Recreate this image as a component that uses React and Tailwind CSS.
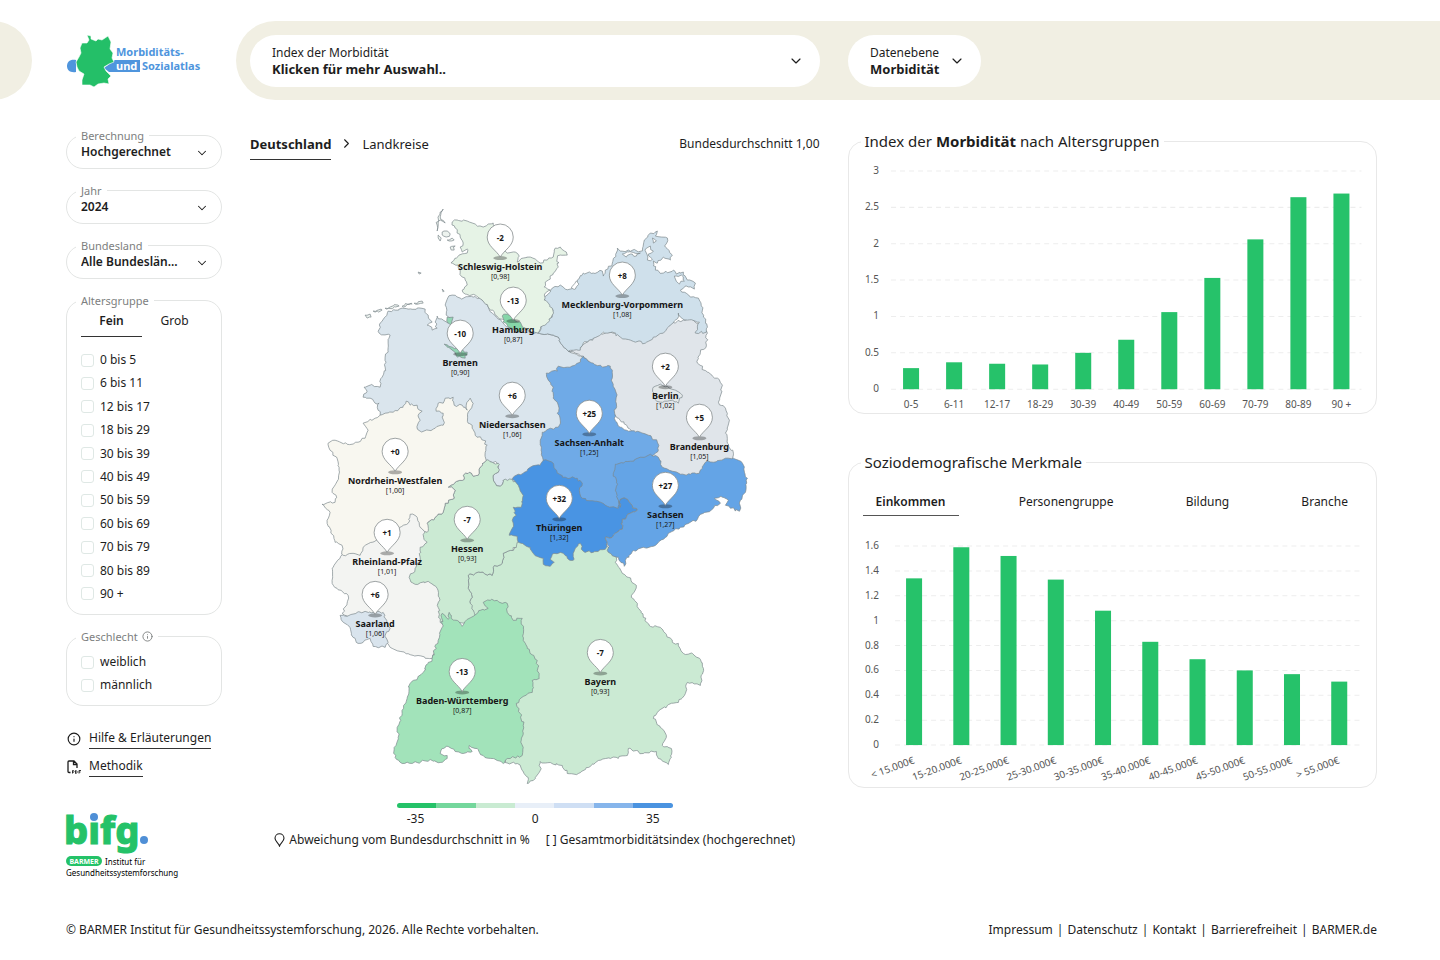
import { ChevronDown, ChevronRight, Info } from 'lucide-react';

const AGE_GROUPS = [
  '0 bis 5', '6 bis 11', '12 bis 17', '18 bis 29', '30 bis 39', '40 bis 49',
  '50 bis 59', '60 bis 69', '70 bis 79', '80 bis 89', '90 +',
];

const MORBIDITY_BY_AGE = [
  ['0-5', 0.29], ['6-11', 0.37], ['12-17', 0.35], ['18-29', 0.34], ['30-39', 0.5], ['40-49', 0.68],
  ['50-59', 1.06], ['60-69', 1.53], ['70-79', 2.06], ['80-89', 2.64], ['90 +', 2.69],
];

const MORBIDITY_BY_INCOME = [
  ['< 15.000€', 1.34], ['15-20.000€', 1.59], ['20-25.000€', 1.52], ['25-30.000€', 1.33], ['30-35.000€', 1.08],
  ['35-40.000€', 0.83], ['40-45.000€', 0.69], ['45-50.000€', 0.6], ['50-55.000€', 0.57], ['> 55.000€', 0.51],
];

// Painted in this order, later shapes cover the edges of earlier ones
const STATES = [
  { id: 'NI', fill: '#dae5ed', points: '448,297 452,295 460,298 473,297 480,298 487,305 492,313 498,319 508,327 524,332 538,333 553,335 558,337 562,345 568,351 576,354 590,362 590,430 560,480 515,490 503,480 500,486 495,483 493,475 498,472 497,463 490,461 480,466 462,440 443,430 420,436 410,420 380,415 378,410 379,403 375,403 370,398 363,397 367,391 364,387 370,385 380,387 382,377 385,367 385,357 388,352 388,343 390,335 379,333 380,323 385,317 388,311 395,310 402,308 408,309 417,308 425,309 428,315 432,322 427,325 432,330 437,328 435,322 437,316 443,320 448,323 450,318 446,315 445,305' },
  { id: 'RP', fill: '#f3f4f2', points: '343,553 353,545 372,538 400,520 412,510 430,525 440,560 445,590 445,620 440,640 432,658 428,658 413,655 400,651 392,648 386,642 370,630 342,613 347,603 348,595 337,588 332,580 332,568 340,558' },
  { id: 'BB', fill: '#e0e5ea', points: '568,351 580,348 600,333 650,330 690,318 707,333 706,345 700,352 697,363 707,372 717,378 722,385 718,402 725,408 729,420 725,433 727,443 733,453 731,462 705,475 690,480 655,476 640,440 600,400 590,363 583,356 575,353' },
  { id: 'MV', fill: '#cfe0eb', points: '550,292 552,288 560,285 565,289 573,288 577,280 583,273 593,273 602,271 603,276 605,270 612,263 617,248 620,251 628,250 642,251 644,240 650,233 657,231 655,236 661,237 667,238 665,247 672,255 670,260 663,257 657,263 653,261 655,270 663,273 673,270 676,274 683,272 687,280 695,283 694,289 686,286 680,290 690,297 698,298 702,310 707,327 706,332 695,333 697,326 699,322 687,320 680,317 678,313 675,320 668,327 663,333 653,337 645,343 630,340 620,337 612,332 603,332 600,335 583,343 580,350 568,351 562,345 558,337 553,335 538,333 541,326 547,322 552,317 553,310 547,307 544,297' },
  { id: 'SH', fill: '#e6f3e6', points: '452,222 457,220 467,221 475,224 483,227 488,224 493,223 495,227 491,234 500,250 507,253 515,252 519,256 517,262 523,258 530,257 535,259 540,263 547,260 553,257 554,250 555,248 560,247 566,252 567,255 560,255 557,258 558,267 553,273 550,279 545,282 544,287 550,290 545,293 544,300 552,308 552,315 547,323 540,327 538,333 524,330 505,320 495,315 488,307 482,300 475,295 465,294 462,290 467,285 465,280 462,277 460,272 458,265 451,263 455,258 467,253 467,249 462,252 460,247 463,243 460,237 455,228' },
  { id: 'ST', fill: '#6faae7', points: '546,373 557,371 558,366 567,367 575,365 580,362 583,356 588,361 593,363 602,367 610,366 612,370 611,380 616,393 616,403 614,418 620,427 628,431 640,432 648,435 657,442 658,450 653,455 640,465 630,490 618,508 590,510 555,480 543,460 540,440 542,432 550,428 558,427 560,420 557,413 558,405 553,398 553,387 548,380' },
  { id: 'BY', fill: '#cbead3', points: '468,575 480,572 492,575 493,567 502,563 503,553 513,550 517,540 560,535 600,540 612,550 616,557 615,562 622,573 628,577 636,585 631,597 637,603 643,617 650,626 660,627 666,634 672,642 678,643 683,653 692,653 700,659 703,668 700,685 687,682 685,693 678,702 667,705 657,712 653,718 660,727 666,735 662,745 671,748 671,757 668,764 658,758 656,751 643,753 636,750 628,748 627,755 610,758 598,760 588,767 578,773 567,773 562,765 550,762 540,761 540,770 533,780 527,783 528,777 522,770 517,763 505,762 500,740 500,640 472,616 470,603 472,597 468,588' },
  { id: 'HE', fill: '#cbead3', points: '486,460 492,462 498,463 498,472 493,475 495,483 500,486 503,480 512,479 525,490 525,530 517,542 513,550 503,553 502,563 493,567 492,575 480,572 468,575 468,588 472,597 470,603 474,612 476,622 440,622 438,607 439,597 437,588 428,581 415,584 409,577 415,568 420,557 420,547 427,542 423,534 427,523 435,517 443,512 445,503 454,498 455,490 448,487 455,482 464,479 463,475 469,472 473,476 479,473 480,467' },
  { id: 'NW', fill: '#f8f7f0', points: '380,415 385,413 393,412 403,407 406,401 410,405 417,405 418,409 422,411 418,415 420,420 417,428 420,431 428,430 435,428 443,425 443,413 436,411 438,403 443,403 445,398 453,397 454,405 462,405 467,410 466,405 470,398 473,403 468,412 468,423 472,428 475,435 483,440 487,445 485,452 486,460 480,467 479,473 473,476 469,472 463,475 464,479 455,482 448,487 455,490 454,498 445,503 443,512 435,517 427,523 427,532 420,527 417,517 410,514 408,523 400,527 386,536 372,542 363,547 360,555 353,553 343,555 342,545 335,542 331,530 327,520 330,512 322,504 335,502 336,495 332,492 336,483 339,470 337,458 330,450 328,443 335,440 347,444 358,442 365,438 368,430 363,423 375,418' },
  { id: 'TH', fill: '#4994e3', points: '512,479 513,477 523,473 530,467 540,465 543,460 553,463 557,473 565,477 577,478 582,483 579,490 582,498 595,501 607,506 618,508 620,499 625,498 630,503 637,510 630,513 622,519 622,529 615,533 612,537 605,537 607,542 605,549 593,552 583,551 580,543 575,548 573,560 567,558 563,553 552,554 550,559 554,562 550,566 543,564 543,558 533,553 530,547 518,542 517,536 509,535 512,528 512,520 516,515 513,507 521,507 523,495 518,485' },
  { id: 'SN', fill: '#64a4e6', points: '615,464 630,461 640,457 650,454 658,457 662,467 672,471 680,474 690,474 699,473 703,465 705,462 713,462 725,458 733,458 742,463 744,472 747,478 745,492 740,500 739,511 730,508 725,505 728,500 722,497 714,498 720,503 713,508 703,513 697,519 680,527 668,533 663,539 653,546 643,547 632,551 625,560 624,566 618,557 608,552 607,542 605,537 612,537 615,533 622,529 622,519 630,513 637,510 630,503 625,498 620,499 620,507 618,500 616,492 616,482 613,473' },
  { id: 'BW', fill: '#a2e3ba', points: '483,602 490,600 497,600 502,603 507,603 507,612 513,620 520,618 522,618 523,640 527,648 537,660 539,678 532,680 532,692 523,696 516,703 520,713 523,725 521,740 523,747 522,755 507,758 503,763 497,760 483,755 477,748 469,745 472,751 463,753 455,751 448,746 442,748 440,753 447,755 447,758 440,762 430,759 417,762 402,763 395,757 394,747 398,737 397,727 402,713 407,698 410,683 423,672 428,663 432,658 438,640 442,627 442,613 448,619 449,612 451,618 457,620 462,626 467,619 473,616 480,610 488,608' },
  { id: 'SL', fill: '#d9e4ed', points: '340,615 347,616 357,612 365,611 383,612 387,623 390,628 385,635 388,642 385,647 373,646 370,638 363,642 358,643 353,637 350,627 341,619' },
  { id: 'HB', fill: '#93d6b5', points: '444,344 452,347 459,350 467,352 465,358 457,357 452,350' },
  { id: 'HB2', fill: '#93d6b5', points: '447,317 453,317 451,325 448,323' },
  { id: 'HH', fill: '#86d6a8', points: '502,316 507,314 513,318 520,322 525,328 518,332 508,327 503,322' },
  { id: 'BE', fill: '#e3e8e9', points: '653,387 660,384 667,386 675,390 682,395 678,403 672,400 660,402 653,397' },
];

const ISLANDS = [
  '443,209 440,212 438,218 437,225 437,231 438,224 440,220 445,223 440,217 441,212',
  '442,232 447,231 450,234 446,237 442,235',
  '438,235 441,238 440,241 438,238',
  '447,240 452,238 454,240 449,241',
  '450,247 455,246 454,250 451,250',
  '418,272 421,273 419,274',
  '442,289 444,291 443,292',
  '365,315 370,314 371,317 367,318',
  '373,311 381,309 382,310 375,312',
  '385,308 398,305 399,306 386,309',
  '402,306 411,303 412,304 403,307',
  '414,303 422,301 423,303 415,304',
];

// Inlets and lagoons behind the Baltic coast
const LAGOONS = [
  '571,288 576,281 578,283 575,289',
  '622,254 628,252 640,253 636,256 630,254 626,257',
  '645,249 650,246 653,251 648,254 652,259 647,260',
  '674,276 681,275 684,281 679,284',
  '652,238 656,241 653,243',
];

const PINS = [
  { x: 500, y: 238, value: '-2', name: 'Schleswig-Holstein', index: '0,98' },
  { x: 622, y: 276, value: '+8', name: 'Mecklenburg-Vorpommern', index: '1,08' },
  { x: 513, y: 301, value: '-13', name: 'Hamburg', index: '0,87' },
  { x: 460, y: 334, value: '-10', name: 'Bremen', index: '0,90' },
  { x: 665, y: 367, value: '+2', name: 'Berlin', index: '1,02' },
  { x: 512, y: 396, value: '+6', name: 'Niedersachsen', index: '1,06' },
  { x: 589, y: 414, value: '+25', name: 'Sachsen-Anhalt', index: '1,25' },
  { x: 699, y: 418, value: '+5', name: 'Brandenburg', index: '1,05' },
  { x: 395, y: 452, value: '+0', name: 'Nordrhein-Westfalen', index: '1,00' },
  { x: 665, y: 486, value: '+27', name: 'Sachsen', index: '1,27' },
  { x: 559, y: 499, value: '+32', name: 'Thüringen', index: '1,32' },
  { x: 467, y: 520, value: '-7', name: 'Hessen', index: '0,93' },
  { x: 387, y: 533, value: '+1', name: 'Rheinland-Pfalz', index: '1,01' },
  { x: 375, y: 595, value: '+6', name: 'Saarland', index: '1,06' },
  { x: 600, y: 653, value: '-7', name: 'Bayern', index: '0,93' },
  { x: 462, y: 672, value: '-13', name: 'Baden-Württemberg', index: '0,87' },
];

const LEGEND_COLORS = ['#24c268', '#74d79c', '#c9ebd2', '#e8eff8', '#cfdff4', '#86b5eb', '#4a93e0'];

const FOOTER_LINKS = ['Impressum', 'Datenschutz', 'Kontakt', 'Barrierefreiheit', 'BARMER.de'];

// Cheap repeatable noise, so a border looks the same on each render
function noise(a, b) {
  const v = Math.sin(a * 12.9898 + b * 78.233) * 43758.5453;
  return v - Math.floor(v) - 0.5;
}

// Splits each edge into short pieces and shakes them a little, gives the ragged border
function ragged(points) {
  const pts = points.split(' ').map(p => p.split(',').map(Number));
  const out = [];
  pts.forEach(([x1, y1], i) => {
    const [x2, y2] = pts[(i + 1) % pts.length];
    const steps = Math.max(1, Math.round(Math.hypot(x2 - x1, y2 - y1) / 2.5));
    for (let s = 0; s < steps; s++) {
      const x = x1 + ((x2 - x1) * s) / steps;
      const y = y1 + ((y2 - y1) * s) / steps;
      const k = s === 0 ? 0 : 2.6;
      out.push(`${(x + noise(x, y) * k).toFixed(1)},${(y + noise(y, x) * k).toFixed(1)}`);
    }
  });
  return out.join(' ');
}

function SelectBox({ id, label, value }) {
  return (
    <fieldset className="min-w-0 rounded-[17px] border border-[#e3e5e4] h-[42px]">
      <legend className="ml-[9px] px-[5px] text-[11px] leading-[17px] text-[#7d8080]">
        <label htmlFor={id}>{label}</label>
      </legend>
      <div className="relative">
        <select id={id} className="block w-full appearance-none bg-transparent pl-3.5 pr-10 text-xs leading-4 font-semibold text-ellipsis outline-none">
          <option>{value}</option>
        </select>
        <ChevronDown size={14} strokeWidth={1.75} className="pointer-events-none absolute right-3 top-[2px]" />
      </div>
    </fieldset>
  );
}

function HeaderSelect({ id, label, value, className }) {
  return (
    <div className={`relative rounded-full bg-white ${className}`}>
      <label htmlFor={id} className="absolute left-[22px] top-[10px] text-xs leading-4">{label}</label>
      <select id={id} className="block h-[52px] w-full appearance-none rounded-full bg-transparent pl-[22px] pr-8 pt-[18px] text-[13px] font-bold outline-none">
        <option>{value}</option>
      </select>
      <ChevronDown size={16} strokeWidth={1.75} className="pointer-events-none absolute right-4 top-[18px]" />
    </div>
  );
}

function CheckRow({ label }) {
  return (
    <label className="flex h-5 items-center gap-1.5 text-xs">
      <input type="checkbox" className="size-[13px] appearance-none rounded-[3px] border border-[#dfe8e5] bg-white" />
      {label}
    </label>
  );
}

function AtlasLogo() {
  return (
    <svg viewBox="66 32 142 58" className="block h-[58px] w-[142px]" role="img" aria-label="Morbiditäts- und Sozialatlas">
      <path d="M76 60c-6-1-9 2-9 6s3 7 9 6z" fill="#4f95dd" />
      <path d="M104 68l11-8h25v12h-31z" fill="#4f95dd" />
      <polygon
        points="87,35 91,36 91,39 96,41 98,39 102,40 105,38 108,36 111,42 110,49 113,53 112,58 114,62 109,64 104,67 106,71 111,76 108,79 109,84 104,83 98,84 94,87 90,85 82,85 82,80 84,74 79,71 77,67 76,62 79,57 81,53 80,48 82,43 87,43 89,40"
        fill="#24bf68" stroke="#fff" strokeWidth="0.6"
      />
      <g fontSize="11" fontWeight="700" fill="#4f95dd">
        <text x="116" y="56">Morbiditäts-</text>
        <text x="116" y="70" fill="#fff">und</text>
        <text x="142" y="70">Sozialatlas</text>
      </g>
    </svg>
  );
}

function BifgLogo() {
  return (
    <svg viewBox="60 798 130 82" className="-ml-1.5 block h-[82px] w-[130px]" role="img" aria-label="bifg. BARMER Institut für Gesundheitssystemforschung">
      <text x="64" y="844" fontSize="38" fontWeight="800" fill="#24c268" stroke="#24c268" strokeWidth="1">bifg</text>
      <circle cx="94" cy="816" r="6" fill="#fff" />
      <circle cx="94" cy="817" r="4" fill="#4f8fd6" />
      <circle cx="144" cy="840" r="4" fill="#4f8fd6" />
      <rect x="66" y="856" width="36" height="10" rx="5" fill="#24c268" />
      <text x="84" y="864" fontSize="7" fontWeight="700" fill="#fff" textAnchor="middle">BARMER</text>
      <text x="105" y="865" fontSize="8">Institut für</text>
      <text x="66" y="876" fontSize="8">Gesundheitssystemforschung</text>
    </svg>
  );
}

function PdfIcon() {
  return (
    <svg width="14" height="14" viewBox="0 0 14 14" fill="none" stroke="currentColor" strokeWidth="1.3">
      <path d="M3.500 12.500H2a1 1 0 0 1-1-1V2a1 1 0 0 1 1-1h5l3 3v4M6.500 1v3.500H10" />
      <path d="M5.500 13.500v-3h1a1 1 0 0 1 0 1.800h-1M8.500 10.500v3c2.200 0 2.200-3 0-3M12 13.500v-3h2M12 12h1.500" strokeWidth="0.9" />
    </svg>
  );
}

function Pin({ x, y, value, name, index }) {
  return (
    <g>
      <ellipse cx={x} cy={y + 20} rx="7" ry="2" fill="#000" opacity="0.3" />
      <path
        d={`M${x} ${y + 19}C${x - 4} ${y + 12} ${x - 13} ${y + 8} ${x - 13} ${y - 1}a13 13 0 0 1 26 0C${x + 13} ${y + 8} ${x + 4} ${y + 12} ${x} ${y + 19}z`}
        fill="#fff" stroke="#858b8d" strokeWidth="0.8"
      />
      <text x={x} y={y + 3} fontSize="8" fontWeight="700" textAnchor="middle">{value}</text>
      <text x={x} y={y + 32} fontSize="9" fontWeight="700" textAnchor="middle">{name}</text>
      <text x={x} y={y + 41} fontSize="7" textAnchor="middle">[{index}]</text>
    </g>
  );
}

function GermanyMap() {
  return (
    <svg viewBox="250 200 569 590" className="block w-full" role="img" aria-label="Karte der Bundesländer">
      <g stroke="#7d888c" strokeWidth="0.7" strokeLinejoin="round">
        {STATES.map(s => <polygon key={s.id} points={ragged(s.points)} fill={s.fill} />)}
        {ISLANDS.map(p => <polygon key={p} points={ragged(p)} fill="#edf3ef" />)}
        {LAGOONS.map(p => <polygon key={p} points={ragged(p)} fill="#fff" />)}
      </g>
      <g fill="#161616">
        {PINS.map(p => <Pin key={p.name} {...p} />)}
      </g>
    </svg>
  );
}

function BarChart({ data, ticks, unit, height, left, first, step, labelGap, slanted }) {
  const top = 10;
  const base = top + ticks[0] * unit;
  const labelY = base + labelGap;
  return (
    <svg viewBox={`0 0 527 ${height}`} className="block w-full" role="img" aria-label="Balkendiagramm">
      {ticks.map(t => {
        const y = base - t * unit;
        return (
          <g key={t}>
            <line x1={left} x2="512" y1={y} y2={y} stroke="#ededed" strokeDasharray="5 4" />
            <text x="30" y={y + 3} fontSize="10" textAnchor="end" fill="#555">{t}</text>
          </g>
        );
      })}
      {data.map(([label, value], i) => {
        const x = first + i * step;
        return (
          <g key={label}>
            <rect x={x - 8} y={base - value * unit} width="16" height={value * unit} fill="#26c26a" />
            {slanted ? (
              <text x={x + 1} y={labelY} fontSize="10" textAnchor="end" fill="#555" transform={`rotate(-20 ${x + 1} ${labelY})`}>{label}</text>
            ) : (
              <text x={x} y={labelY} fontSize="10" textAnchor="middle" fill="#555">{label}</text>
            )}
          </g>
        );
      })}
    </svg>
  );
}

function ChartPanel({ title, children }) {
  return (
    <fieldset className="min-w-0 rounded-2xl border border-[#e8e8e8]">
      <legend className="ml-3 px-1 text-[15px] leading-6">{title}</legend>
      {children}
    </fieldset>
  );
}

export default function App() {
  return (
    <div className="min-h-screen bg-white pt-[21px] font-['Noto_Sans',sans-serif] text-[#1d1d1d]">
      <header className="flex h-[79px] items-center">
        <div className="h-full w-8 overflow-hidden">
          <div className="-ml-[47px] h-full w-[79px] rounded-full bg-[#f1efe3]" />
        </div>
        <a href="#" className="ml-[34px] w-[170px]"><AtlasLogo /></a>
        <div className="flex h-full flex-1 items-start gap-7 rounded-l-full bg-[#f1efe3] pl-3.5 pt-3.5">
          <HeaderSelect id="index" label="Index der Morbidität" value="Klicken für mehr Auswahl.." className="w-[570px]" />
          <HeaderSelect id="ebene" label="Datenebene" value="Morbidität" className="w-[133px]" />
        </div>
      </header>

      <main className="grid grid-cols-[156px_569fr_529fr] gap-x-7 pl-[66px] pr-[63px] pt-[27px]">
        <aside className="flex flex-col">
          <div className="flex flex-col gap-[13px]">
            <SelectBox id="berechnung" label="Berechnung" value="Hochgerechnet" />
            <SelectBox id="jahr" label="Jahr" value="2024" />
            <SelectBox id="land" label="Bundesland" value="Alle Bundeslän..." />

            <fieldset className="rounded-[17px] border border-[#e3e5e4] px-3.5 pb-2.5">
              <legend className="-ml-[5px] px-[5px] text-[11px] leading-[17px] text-[#7d8080]">Altersgruppe</legend>
              <div className="flex text-xs">
                <button className="h-7 w-[61px] border-b border-[#333] pb-1 font-semibold">Fein</button>
                <button className="h-7 w-[65px] pb-1">Grob</button>
              </div>
              <div className="mt-[13px] flex h-[254px] flex-col justify-between">
                {AGE_GROUPS.map(g => <CheckRow key={g} label={g} />)}
              </div>
            </fieldset>

            <fieldset className="rounded-[17px] border border-[#e3e5e4] px-3.5 pb-2.5">
              <legend className="-ml-[5px] flex items-center gap-1 px-[5px] text-[11px] leading-[17px] text-[#7d8080]">
                Geschlecht <Info size={11} />
              </legend>
              <div className="mt-[7px] flex flex-col gap-[3px]">
                <CheckRow label="weiblich" />
                <CheckRow label="männlich" />
              </div>
            </fieldset>
          </div>

          <nav className="mt-[22px] flex flex-col gap-[7px] pl-px text-xs">
            <a href="#" className="flex items-center gap-2">
              <Info size={14} /><span className="border-b border-[#333] leading-5">Hilfe &amp; Erläuterungen</span>
            </a>
            <a href="#" className="flex items-center gap-2">
              <PdfIcon /><span className="border-b border-[#333] leading-5">Methodik</span>
            </a>
          </nav>
          <a href="#" className="mt-[21px]"><BifgLogo /></a>
        </aside>

        <section>
          <div className="flex items-start justify-between pt-2">
            <div className="flex items-start gap-2">
              <button className="h-[25px] border-b border-[#333] pb-[7px] text-[13px] leading-[18px] font-bold">Deutschland</button>
              <ChevronRight size={15} strokeWidth={1.75} className="mt-px" />
              <button className="text-[13px] leading-[18px]">Landkreise</button>
            </div>
            <p className="text-xs leading-[18px]">Bundesdurchschnitt 1,00</p>
          </div>
          <div className="mt-10">
            <GermanyMap />
          </div>
          <div className="mx-auto mt-3 w-[276px]">
            <div className="flex h-[5px] overflow-hidden rounded-full">
              {LEGEND_COLORS.map(c => <span key={c} className="flex-1" style={{ backgroundColor: c }} />)}
            </div>
            <div className="mt-px flex justify-between pl-2.5 pr-[13px] text-xs leading-5">
              <span>-35</span><span>0</span><span>35</span>
            </div>
          </div>
          <div className="flex items-center justify-center gap-4 text-xs leading-[22px]">
            <span className="flex items-center gap-1">
              <svg width="11" height="14" viewBox="0 0 11 14" fill="none" stroke="currentColor" strokeWidth="1.100">
                <path d="M5.500 13C4.500 10 1 8.500 1 5.300a4.500 4.500 0 0 1 9 0C10 8.500 6.500 10 5.500 13z" />
              </svg>
              Abweichung vom Bundesdurchschnitt in %
            </span>
            <span>[ ] Gesamtmorbiditätsindex (hochgerechnet)</span>
          </div>
        </section>

        <section className="flex flex-col gap-9 pt-0.5">
          <ChartPanel title={<>Index der <b>Morbidität</b> nach Altersgruppen</>}>
            <div className="pt-2">
              <BarChart data={MORBIDITY_BY_AGE} ticks={[3, 2.5, 2, 1.5, 1, 0.5, 0]} unit={72.67} height={252} left={42} first={62} step={43} labelGap={19} />
            </div>
          </ChartPanel>

          <ChartPanel title="Soziodemografische Merkmale">
            <div className="flex justify-between pl-3.5 pr-4 pt-3 text-xs">
              <button className="h-[30px] w-24 border-b border-[#555] pt-0.5 font-semibold">Einkommen</button>
              <button className="h-[30px] px-3 pt-0.5">Personengruppe</button>
              <button className="h-[30px] px-3 pt-0.5">Bildung</button>
              <button className="h-[30px] px-3 pt-0.5">Branche</button>
            </div>
            <div className="pt-5">
              <BarChart data={MORBIDITY_BY_INCOME} ticks={[1.6, 1.4, 1.2, 1, 0.8, 0.6, 0.4, 0.2, 0]} unit={124.3} height={251} left={46} first={65} step={47.2} labelGap={18} slanted />
            </div>
          </ChartPanel>
        </section>
      </main>

      <footer className="flex justify-between pl-[66px] pr-[63px] pb-5 pt-10 text-xs leading-5">
        <p>© BARMER Institut für Gesundheitssystemforschung, 2026. Alle Rechte vorbehalten.</p>
        <nav className="flex">
          {FOOTER_LINKS.map((l, i) => (
            <span key={l}>{i > 0 && <span className="mx-1">|</span>}<a href="#">{l}</a></span>
          ))}
        </nav>
      </footer>
    </div>
  );
}
